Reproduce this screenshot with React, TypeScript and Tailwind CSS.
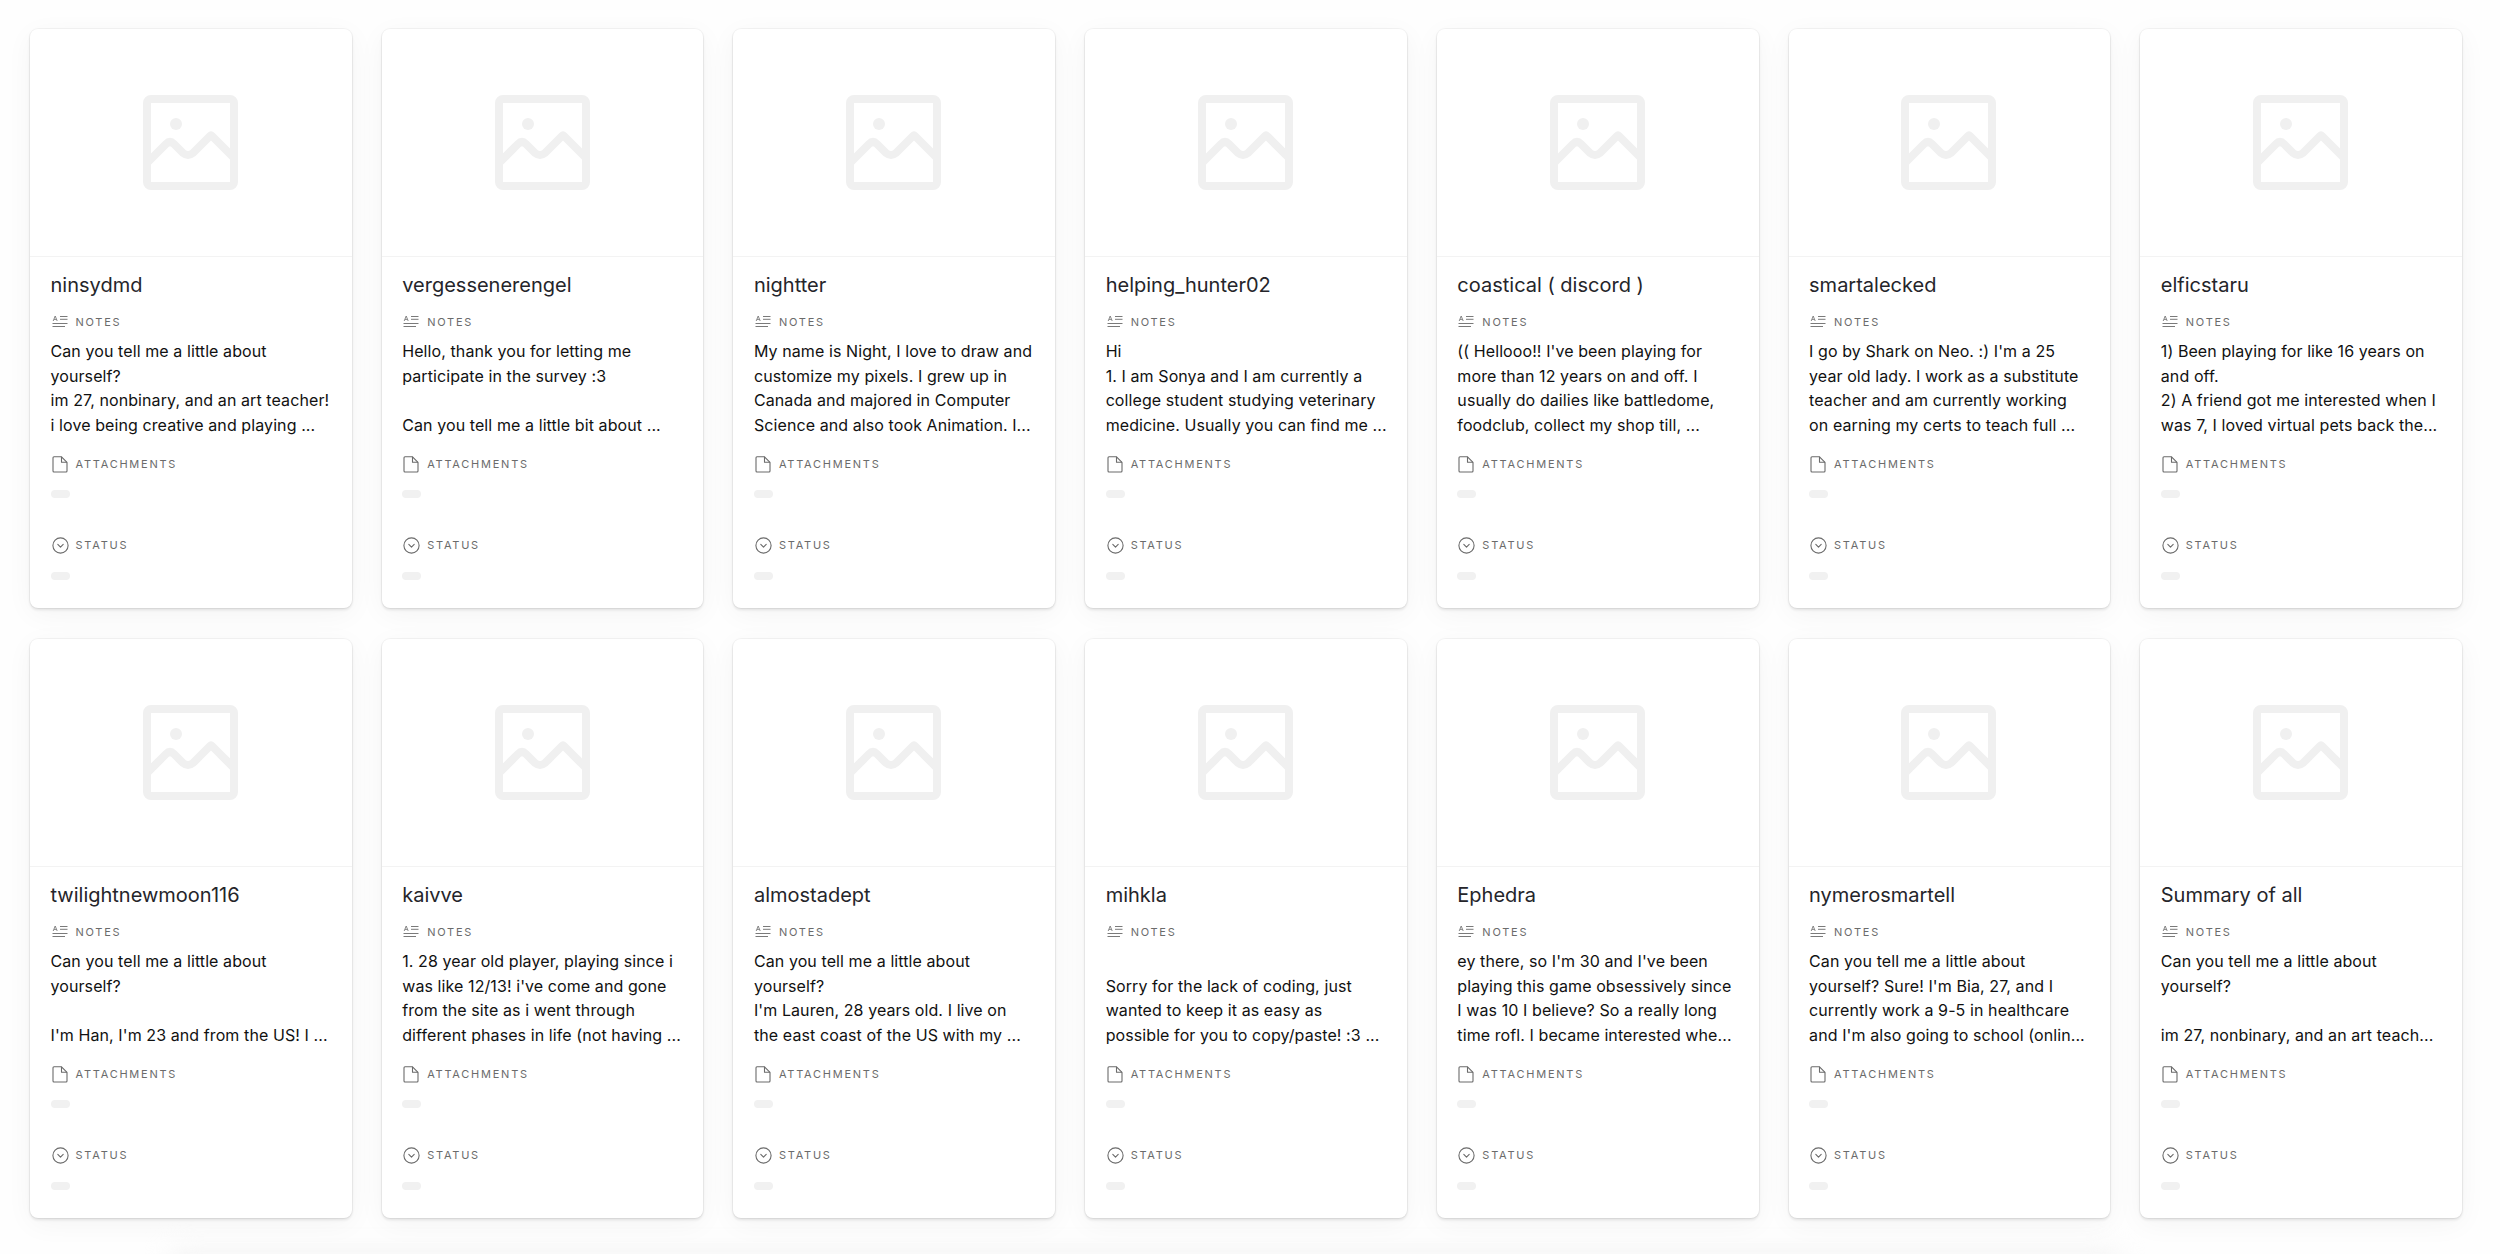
const cards: [string, string[]][] = [
  ["ninsydmd", ["Can you tell me a little about", "yourself?", "im 27, nonbinary, and an art teacher!", "i love being creative and playing ..."]],
  ["vergessenerengel", ["Hello, thank you for letting me", "participate in the survey :3", "", "Can you tell me a little bit about ..."]],
  ["nightter", ["My name is Night, I love to draw and", "customize my pixels. I grew up in", "Canada and majored in Computer", "Science and also took Animation. I..."]],
  ["helping_hunter02", ["Hi", "1. I am Sonya and I am currently a", "college student studying veterinary", "medicine. Usually you can find me ..."]],
  ["coastical ( discord )", ["(( Hellooo!! I've been playing for", "more than 12 years on and off. I", "usually do dailies like battledome,", "foodclub, collect my shop till, ..."]],
  ["smartalecked", ["I go by Shark on Neo. :) I'm a 25", "year old lady. I work as a substitute", "teacher and am currently working", "on earning my certs to teach full ..."]],
  ["elficstaru", ["1) Been playing for like 16 years on", "and off.", "2) A friend got me interested when I", "was 7, I loved virtual pets back the..."]],
  ["twilightnewmoon116", ["Can you tell me a little about", "yourself?", "", "I'm Han, I'm 23 and from the US! I ..."]],
  ["kaivve", ["1. 28 year old player, playing since i", "was like 12/13! i've come and gone", "from the site as i went through", "different phases in life (not having ..."]],
  ["almostadept", ["Can you tell me a little about", "yourself?", "I'm Lauren, 28 years old. I live on", "the east coast of the US with my ..."]],
  ["mihkla", ["", "Sorry for the lack of coding, just", "wanted to keep it as easy as", "possible for you to copy/paste! :3 ..."]],
  ["Ephedra", ["ey there, so I'm 30 and I've been", "playing this game obsessively since", "I was 10 I believe? So a really long", "time rofl. I became interested whe..."]],
  ["nymerosmartell", ["Can you tell me a little about", "yourself? Sure! I'm Bia, 27, and I", "currently work a 9-5 in healthcare", "and I'm also going to school (onlin..."]],
  ["Summary of all", ["Can you tell me a little about", "yourself?", "", "im 27, nonbinary, and an art teach..."]],
];

function ImageIcon() {
  return (
    <svg width="96" height="96" viewBox="0 0 96 96" fill="none" stroke="#f0f0f0" strokeWidth="8">
      <rect x="4" y="4" width="87" height="87" rx="4" />
      <circle cx="33" cy="29" r="6" fill="#f0f0f0" stroke="none" />
      <path d="M4 68 L23 49 Q27 45 31 49 L40 58 Q45 62 50 58 L63 45 L67 41 Q68 40 69 41 L91 63" strokeLinejoin="round" />
    </svg>
  );
}

function NotesIcon() {
  return (
    <svg width="16" height="14" viewBox="0 0 16 14" fill="none" stroke="#6b6b6b" strokeWidth="0.9">
      <path d="M1.2 6 L3.2 1 L5.2 6 M2 4.4 H4.4" strokeWidth="0.8" />
      <path d="M8 1.5 H15.5 M8 4.3 H15.5" />
      <path d="M0.5 8.5 H15.5 M0.5 11.5 H13" />
    </svg>
  );
}

function FileIcon() {
  return (
    <svg width="16" height="17" viewBox="0 0 16 17" fill="none" stroke="#6b6b6b" strokeWidth="1.1" strokeLinejoin="round">
      <path d="M2 0.8 H9.5 L15 6.3 V15 Q15 16 14 16 H2 Q1 16 1 15 V1.8 Q1 0.8 2 0.8 Z" />
      <path d="M9.5 0.8 V6.3 H15" />
    </svg>
  );
}

function StatusIcon() {
  return (
    <svg width="17" height="17" viewBox="0 0 17 17" fill="none" stroke="#6b6b6b" strokeWidth="1.1">
      <circle cx="8.5" cy="8.5" r="7.6" />
      <path d="M5.8 7.4 L8.5 10.2 L11.2 7.4" strokeLinecap="round" strokeLinejoin="round" />
    </svg>
  );
}

function Label({ text }: { text: string }) {
  return <span className="text-[11px] leading-[16px] tracking-[1.75px] text-[#6b6b6b]">{text}</span>;
}

function Card({ name, lines }: { name: string; lines: string[] }) {
  return (
    <div className="relative h-[579px] rounded-[8px] bg-white shadow-[0_0_0_1px_rgba(0,0,0,0.04),0_2px_3px_rgba(0,0,0,0.1),0_6px_28px_rgba(0,0,0,0.045)] overflow-hidden">
      <div className="h-[228px] flex items-center justify-center border-b border-[#f3f3f3]">
        <ImageIcon />
      </div>
      <div className="px-[20.5px] pt-[13px]">
        <div className="text-[20px] leading-[30px] text-[#25252a]">{name}</div>
        <div className="mt-[14px] flex h-[16px] items-center gap-[8px] pl-[1px]">
          <NotesIcon />
          <Label text="NOTES" />
        </div>
        <div className="mt-[9px] text-[16px] leading-[24.6px] tracking-[0.09px] text-[#111111]">
          {lines.map((l, i) => (
            <div key={i} className="h-[24.6px] whitespace-nowrap">{l}</div>
          ))}
        </div>
        <div className="mt-[18px] flex h-[18px] items-center gap-[8px] pl-[1px]">
          <FileIcon />
          <Label text="ATTACHMENTS" />
        </div>
        <div className="mt-[17px] h-[8px] w-[19px] rounded-full bg-[#f1f1f1]" />
        <div className="mt-[38px] flex h-[18px] items-center gap-[7px] pl-[1px]">
          <StatusIcon />
          <Label text="STATUS" />
        </div>
        <div className="mt-[18px] h-[8px] w-[19px] rounded-full bg-[#f1f1f1]" />
      </div>
    </div>
  );
}

export default function App() {
  return (
    <div className="relative h-[1254px] overflow-hidden bg-[#fefefe] pl-[30px] pr-[38px] pt-[29px] font-['Inter',sans-serif]">
      <div className="absolute left-[170px] top-[1252px] h-[100px] w-[1950px] rounded-[8px] bg-[#f3f3f3] blur-[14px]" />
      <div className="relative grid grid-cols-7 gap-x-[30px] gap-y-[31px]">
        {cards.map(([n, l]) => (
          <Card key={n} name={n} lines={l} />
        ))}
      </div>
    </div>
  );
}
